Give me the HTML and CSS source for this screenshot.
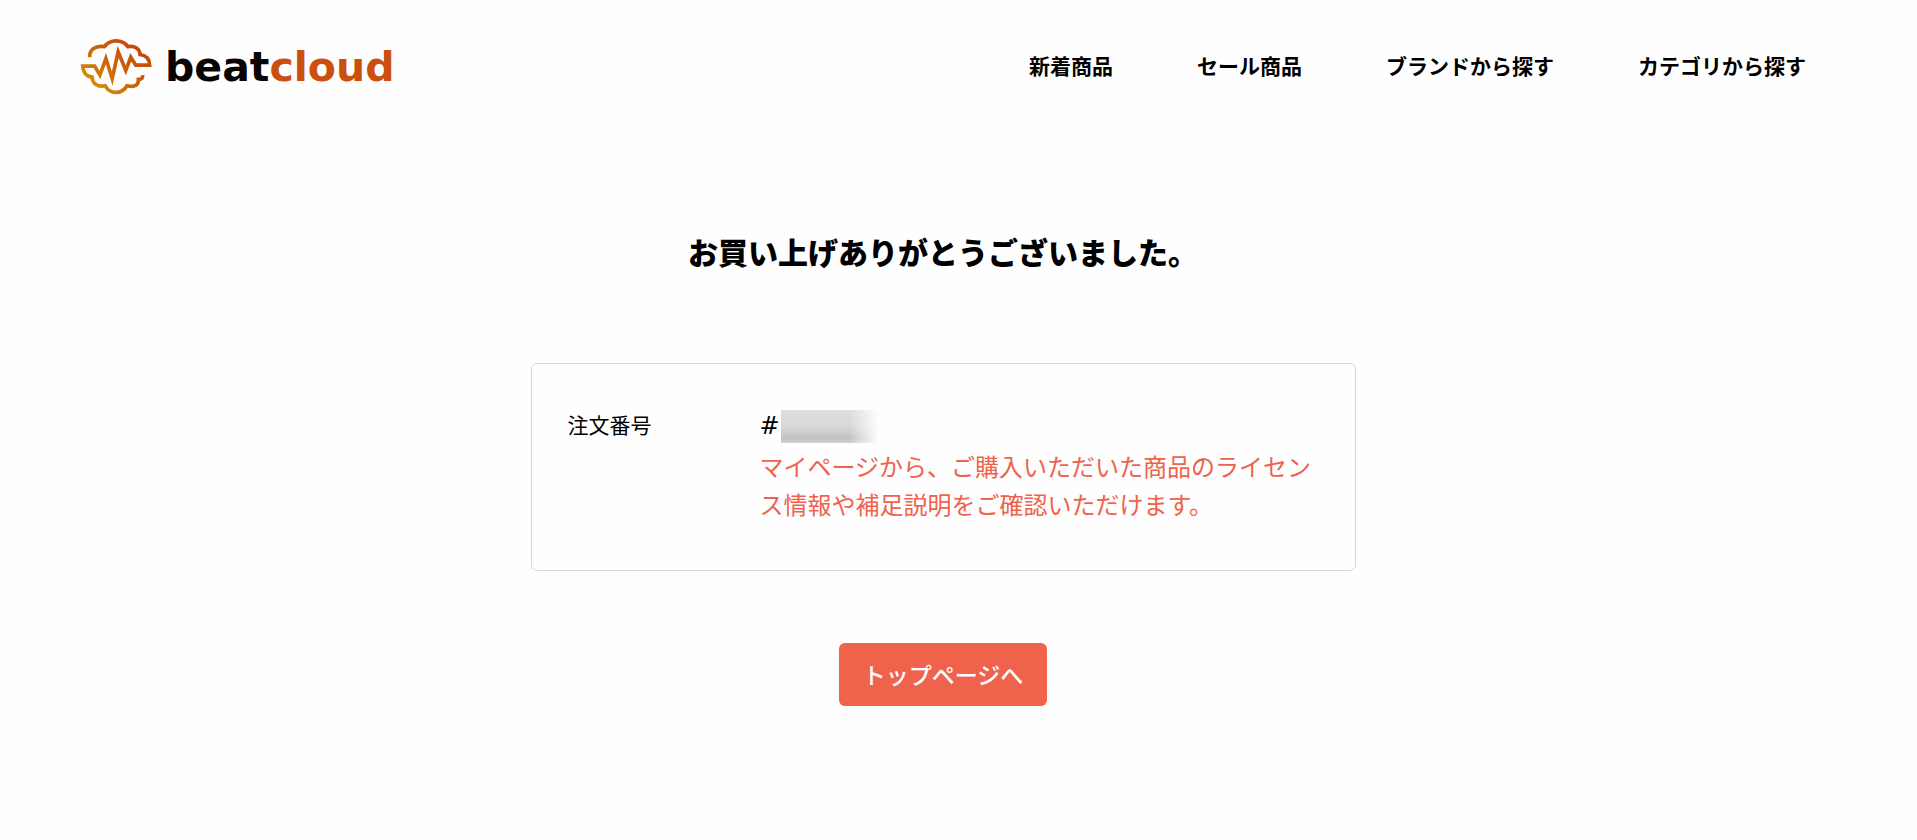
FILE: index.html
```
<!DOCTYPE html>
<html lang="ja">

<head>
  <meta charset="UTF-8">
  <meta name="viewport" content="width=device-width, initial-scale=1.0">
  <title>beatcloud</title>
  <link rel="stylesheet" href="styles.css">
</head>

<body>
  <header class="header">
    <a href="#" class="logo">
      <svg class="logo-icon" viewBox="30 24 220 172" aria-hidden="true">
        <defs>
          <linearGradient id="logoColor" gradientUnits="userSpaceOnUse" x1="70" y1="180" x2="190" y2="50">
            <stop offset="0" stop-color="#d4920b" />
            <stop offset="0.5" stop-color="#cc640a" />
            <stop offset="1" stop-color="#c94a07" />
          </linearGradient>
        </defs>
        <g fill="none" stroke="url(#logoColor)" stroke-width="11">
          <path d="M59 82C58 60 74 46 104 50C120 27 158 27 174 50C196 47 210 57 211 74C230 77 240 88 240 106H198L183 82L168 122L145 66L127 147L108 86L90 136L74 109H38C39 127 48 140 66 142C68 162 82 173 106 168C120 195 156 195 172 168C198 174 207 164 206 149C215 149 220 145 219 136" />
        </g>
      </svg>
      <span class="logo-text">beat<span class="logo-cloud">cloud</span></span>
    </a>
    <nav>
      <ul class="nav">
        <li><a href="#">新着商品</a></li>
        <li><a href="#">セール商品</a></li>
        <li><a href="#">ブランドから探す</a></li>
        <li><a href="#">カテゴリから探す</a></li>
      </ul>
    </nav>
  </header>
  <main class="main">
    <h1 class="title">お買い上げありがとうございました。</h1>
    <dl class="order">
      <dt class="order-label">注文番号</dt>
      <dd class="order-body">
        <p class="number">#<span class="mask"></span></p>
        <p class="note">マイページから、ご購入いただいた商品のライセンス情報や補足説明をご確認いただけます。</p>
      </dd>
    </dl>
    <button type="button" class="btn">トップページへ</button>
  </main>
</body>

</html>
```
FILE: styles.css
```
* {
  margin: 0;
  padding: 0;
  box-sizing: border-box;
}

body {
  padding-right: 31px;
  background-color: #fefefe;
  color: #000;
  font-family: "Noto Sans CJK JP", sans-serif;
}

a {
  color: inherit;
  text-decoration: none;
}

.header {
  display: flex;
  align-items: center;
  justify-content: space-between;
  padding: 38px 80px;
}

.logo {
  display: flex;
  align-items: center;
  gap: 12px;
}

.logo-icon {
  width: 73px;
  height: 57px;
}

.logo-text {
  color: #080404;
  font-family: "DejaVu Sans", sans-serif;
  font-size: 41px;
  font-weight: bold;
  line-height: 48px;
}

.logo-cloud {
  color: #cb500f;
}

.nav {
  display: flex;
  gap: 84px;
  padding-bottom: 4px;
  list-style: none;
  font-size: 21px;
  font-weight: bold;
  line-height: 38px;
}

.main {
  display: flex;
  flex-direction: column;
  align-items: center;
  padding: 94px 24px;
}

.title {
  font-size: 30px;
  font-weight: 900;
  line-height: 48px;
}

.order {
  display: flex;
  width: 100%;
  max-width: 825px;
  margin: 88px 0 72px;
  padding: 43px 36px 47px;
  border: 1px solid #d8d8d8;
  border-radius: 6px;
}

.order-label {
  flex: 0 0 192px;
  font-size: 21px;
  line-height: 34px;
}

.order-body {
  flex: 1;
  font-size: 24px;
  line-height: 38px;
}

.number {
  display: flex;
  align-items: center;
  margin-bottom: 2px;
  font-family: "DejaVu Sans", sans-serif;
}

.note {
  color: #ef624c;
}

.mask {
  width: 98px;
  height: 33px;
  margin-left: 1px;
  background: linear-gradient(to right, transparent 70%, #fefefe), linear-gradient(#dedede, #d8d8d8 50%, #c2c2c2 85%, #d2d2d2);
}

.btn {
  height: 63px;
  padding: 0 24px 2px;
  border: 0;
  border-radius: 6px;
  background-color: #ef624c;
  color: #fff;
  font-family: inherit;
  font-size: 23px;
  font-weight: 500;
  cursor: pointer;
}
```
